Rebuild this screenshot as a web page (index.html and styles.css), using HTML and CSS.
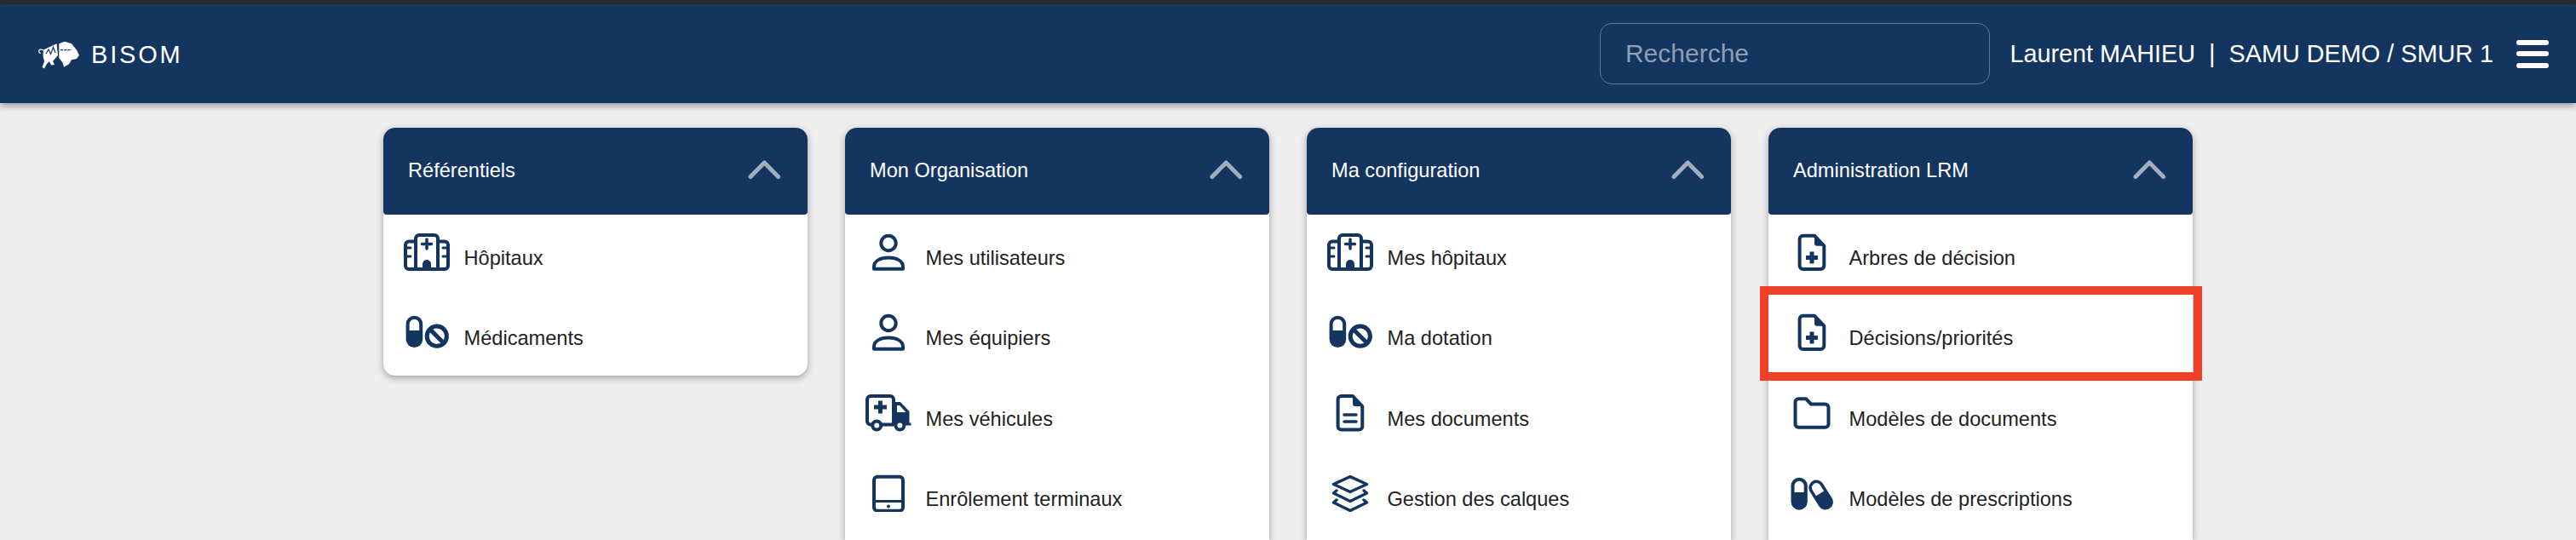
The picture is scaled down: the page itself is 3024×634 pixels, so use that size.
FILE: index.html
```html
<!DOCTYPE html>
<html lang="fr">
<head>
<meta charset="utf-8">
<title>BISOM</title>
<link rel="stylesheet" href="styles.css">
</head>
<body>
<svg class="defs" width="0" height="0" aria-hidden="true">
  <defs>
    <symbol id="i-hospital" viewBox="0 0 56 44">
      <rect x="3" y="9.5" width="50" height="32.5" rx="4" class="ln"/>
      <path d="M15 42V6a4 4 0 0 1 4-4h18a4 4 0 0 1 4 4v36z" class="ln wh"/>
      <path d="M28 7v11M22.5 12.5h11" class="ln l35"/>
      <path d="M23 43V36a5 5 0 0 1 10 0v7z" class="fl"/>
      <path d="M3 17h6M3 27h6M47 17h6M47 27h6" class="ln l3"/>
    </symbol>
    <symbol id="i-nomed" viewBox="0 0 56 44">
      <rect x="3.6" y="2.7" width="19.6" height="37.3" rx="9.8" class="fl"/>
      <path d="M7.6 20V12.6a5.8 5.8 0 0 1 11.6 0V20z" class="wf"/>
      <circle cx="39.8" cy="26.7" r="11.6" class="ln l5"/>
      <path d="M32 18.9L47.6 34.5" class="ln l5"/>
    </symbol>
    <symbol id="i-user" viewBox="0 0 56 44">
      <circle cx="28" cy="11.5" r="8.7" class="ln"/>
      <path d="M11 41.8V39C11 32 19 28.5 28 28.5S45 32 45 39v2.8z" class="ln"/>
    </symbol>
    <symbol id="i-ambulance" viewBox="0 0 56 44">
      <path d="M8 35.5H7a4 4 0 0 1-4-4V6a4 4 0 0 1 4-4h23a4 4 0 0 1 4 4v29.5H20" class="ln"/>
      <path d="M18.4 7.5v15M11 15h15" class="ln l5 bt"/>
      <path d="M34 9h8l10.5 11v13.5h2v3H34z" class="fl"/>
      <path d="M38 13h3l7.5 8H38z" class="wf"/>
      <circle cx="14.2" cy="36.5" r="5" class="ln wh"/>
      <circle cx="41.4" cy="36.5" r="5" class="ln wh"/>
    </symbol>
    <symbol id="i-tablet" viewBox="0 0 56 44">
      <rect x="11" y="2.7" width="34" height="40" rx="4" class="ln"/>
      <path d="M11 31.4h34" class="ln l3"/>
      <circle cx="28" cy="37.5" r="2" class="fl"/>
    </symbol>
    <symbol id="i-doc" viewBox="0 0 56 44">
      <path d="M17.6 2H31L42.3 14V37.5a4 4 0 0 1-4 4H17.6a4 4 0 0 1-4-4V6a4 4 0 0 1 4-4z" class="ln"/>
      <path d="M31 2L42.3 14H34a3 3 0 0 1-3-3z" class="fl"/>
      <path d="M21 24h14M21 32h14" class="ln l35"/>
    </symbol>
    <symbol id="i-docplus" viewBox="0 0 56 44">
      <path d="M17.6 2.700H31L42.300 14.700V38a4 4 0 0 1-4 4H17.600a4 4 0 0 1-4-4V6.700a4 4 0 0 1 4-4z" class="ln"/>
      <path d="M31 2.700L42.300 14.700H34a3 3 0 0 1-3-3z" class="fl"/>
      <path d="M28 21.500v14M21 28.500h14" class="ln l5 bt"/>
    </symbol>
    <symbol id="i-folder" viewBox="0 0 56 44">
      <path d="M8.500 9a3.800 3.800 0 0 1 3.800-3.800H21L27 11.500H43.700a3.800 3.800 0 0 1 3.800 3.800V35a3.800 3.800 0 0 1-3.800 3.800H12.300A3.800 3.800 0 0 1 8.500 35z" class="ln"/>
    </symbol>
    <symbol id="i-layers" viewBox="0 0 56 44">
      <path d="M28 2.700L47.500 11.500L28 20.500L8.500 11.500z" class="ln l35"/>
      <path d="M12 19L8.500 22L28 31.500L47.500 22L44 19" class="ln l35"/>
      <path d="M12 30L8.500 33L28 42.500L47.500 33L44 30" class="ln l35"/>
    </symbol>
    <symbol id="i-pills" viewBox="0 0 56 44">
      <rect x="3.500" y="3.700" width="19.300" height="38" rx="9.650" class="fl"/>
      <path d="M7.500 21V13.400a5.600 5.600 0 0 1 11.200 0V21z" class="wf"/>
      <g transform="rotate(-32 38.600 24)">
        <rect x="29.600" y="5" width="18" height="38" rx="9" class="fl"/>
        <path d="M33.200 22V14a5.400 5.400 0 0 1 10.800 0v8z" class="wf"/>
      </g>
    </symbol>
  </defs>
</svg>

<div class="os-strip"></div>
<header class="navbar">
  <div class="brand">
    <svg class="brand-logo" viewBox="0 0 48 33" aria-hidden="true">
      <path d="M24.300 3.300L31 .7L39 3.300L45 10.700L48 16.700L45 21L39 22.300L36 27.300L30 30.700L28.700 26L24.300 20z" fill="#fff"/>
      <path d="M6 10.500L21.500 3.300L23 17L19.500 21L17 24L19 28L15 28.500L13 24L10 27L7 32.500L4.500 31L7 24L5.500 18z" fill="#fff"/>
      <path d="M6 11C3 9.500 1 10 .5 12C.4 14 2.500 14 2.500 15" class="logo-tail"/>
      <path d="M26 10.700H39" class="logo-dash"/>
      <path d="M9 15L12 10L14.500 15.500L17.500 7.500L20 14" class="logo-ecg"/>
    </svg>
    <span class="brand-name">BISOM</span>
  </div>
  <div class="nav-right">
    <input class="search" type="text" placeholder="Recherche">
    <span class="user">Laurent MAHIEU&nbsp; | &nbsp;SAMU DEMO / SMUR 1</span>
    <div class="burger"><i></i><i></i><i></i></div>
  </div>
</header>

<main class="board">
  <section class="card">
    <div class="card-head"><span>Référentiels</span><svg class="chev" viewBox="0 0 39 23"><path d="M3 19.500L19.300 3L35.600 19.500"/></svg></div>
    <div class="row"><svg class="ico"><use href="#i-hospital"/></svg><span class="lbl">Hôpitaux</span></div>
    <div class="row"><svg class="ico"><use href="#i-nomed"/></svg><span class="lbl">Médicaments</span></div>
  </section>
  <section class="card tall">
    <div class="card-head"><span>Mon Organisation</span><svg class="chev" viewBox="0 0 39 23"><path d="M3 19.500L19.300 3L35.600 19.500"/></svg></div>
    <div class="row"><svg class="ico"><use href="#i-user"/></svg><span class="lbl">Mes utilisateurs</span></div>
    <div class="row"><svg class="ico"><use href="#i-user"/></svg><span class="lbl">Mes équipiers</span></div>
    <div class="row"><svg class="ico"><use href="#i-ambulance"/></svg><span class="lbl">Mes véhicules</span></div>
    <div class="row"><svg class="ico"><use href="#i-tablet"/></svg><span class="lbl">Enrôlement terminaux</span></div>
  </section>
  <section class="card tall">
    <div class="card-head"><span>Ma configuration</span><svg class="chev" viewBox="0 0 39 23"><path d="M3 19.500L19.300 3L35.600 19.500"/></svg></div>
    <div class="row"><svg class="ico"><use href="#i-hospital"/></svg><span class="lbl">Mes hôpitaux</span></div>
    <div class="row"><svg class="ico"><use href="#i-nomed"/></svg><span class="lbl">Ma dotation</span></div>
    <div class="row"><svg class="ico"><use href="#i-doc"/></svg><span class="lbl">Mes documents</span></div>
    <div class="row"><svg class="ico"><use href="#i-layers"/></svg><span class="lbl">Gestion des calques</span></div>
  </section>
  <section class="card tall">
    <div class="card-head"><span>Administration LRM</span><svg class="chev" viewBox="0 0 39 23"><path d="M3 19.500L19.300 3L35.600 19.500"/></svg></div>
    <div class="row"><svg class="ico"><use href="#i-docplus"/></svg><span class="lbl">Arbres de décision</span></div>
    <div class="row marked"><svg class="ico"><use href="#i-docplus"/></svg><span class="lbl">Décisions/priorités</span></div>
    <div class="row"><svg class="ico"><use href="#i-folder"/></svg><span class="lbl">Modèles de documents</span></div>
    <div class="row"><svg class="ico"><use href="#i-pills"/></svg><span class="lbl">Modèles de prescriptions</span></div>
  </section>
</main>
</body>
</html>
```
FILE: styles.css
```css
* { box-sizing: border-box; }
html, body {
  margin: 0;
  height: 634px;
  overflow: hidden;
  background: #eeeeee;
  font-family: "Liberation Sans", Arial, sans-serif;
}
.defs { position: absolute; }

.os-strip { height: 5px; background: #2c2b30; }
.navbar {
  position: relative;
  z-index: 2;
  height: 116px;
  background: #153561;
  box-shadow: 0 3px 8px rgba(0, 0, 0, .38);
  display: flex;
  align-items: center;
  justify-content: space-between;
  padding: 0 32px 0 45px;
}
.brand { display: flex; align-items: center; gap: 14px; margin-top: 2px; }
.brand-logo { width: 48px; height: 33px; }
.logo-tail { fill: none; stroke: #fff; stroke-width: 1.2; }
.logo-dash { fill: none; stroke: #153561; stroke-width: 1.3; stroke-dasharray: 3 1.2; }
.logo-ecg { fill: none; stroke: #153561; stroke-width: 1.2; }
.brand-name { color: #fff; font-size: 29px; letter-spacing: 2.8px; }

.nav-right { display: flex; align-items: center; }
.search {
  width: 458px;
  height: 72px;
  padding: 0 28.5px;
  margin-right: 23px;
  background: transparent;
  border: 1.5px solid #5c7696;
  border-radius: 14px;
  font: 30px "Liberation Sans", Arial, sans-serif;
  color: #fff;
  outline: none;
}
.search::placeholder { color: #8d9db2; opacity: 1; }
.user { color: #fff; font-size: 28.8px; white-space: nowrap; }
.burger { display: flex; flex-direction: column; gap: 7.5px; margin-left: 27px; }
.burger i { display: block; width: 38px; height: 6px; border-radius: 3px; background: #fff; }

.board {
  display: flex;
  justify-content: center;
  align-items: flex-start;
  gap: 44px;
  padding-top: 29px;
}
.card {
  width: 498px;
  background: #fff;
  border-radius: 14px;
  box-shadow: 0 3px 8px rgba(0, 0, 0, .32);
}
.card.tall { padding-bottom: 4px; border-radius: 14px 14px 0 0; }
.card-head {
  height: 102px;
  background: #153561;
  border-radius: 14px 14px 4px 4px;
  color: #fff;
  font-size: 23.6px;
  display: flex;
  align-items: center;
  justify-content: space-between;
  padding: 0 31px 2px 29px;
}
.chev { width: 39px; height: 23px; margin-top: -2px; }
.chev path { fill: none; stroke: #a1aebd; stroke-width: 5; stroke-linecap: round; stroke-linejoin: round; }

.row {
  position: relative;
  height: 94.5px;
  padding: 21.5px 0 0 23px;
  display: flex;
  align-items: flex-start;
  gap: 15.5px;
}
.ico { width: 56px; height: 44px; flex: none; }
.lbl { font-size: 23.6px; line-height: 30px; color: #222; margin-top: 14px; }
.row.marked::after {
  content: "";
  position: absolute;
  top: -10.5px;
  bottom: -5.5px;
  left: -10px;
  right: -11px;
  border: 10px solid #ee4127;
  pointer-events: none;
}

.ln { fill: none; stroke: #153561; stroke-width: 4; stroke-linejoin: round; stroke-linecap: round; }
.wh { fill: #fff; }
.l3 { stroke-width: 3; }
.l35 { stroke-width: 3.5; }
.l5 { stroke-width: 5; }
.bt { stroke-linecap: butt; }
.fl { fill: #153561; }
.wf { fill: #fff; }
```
